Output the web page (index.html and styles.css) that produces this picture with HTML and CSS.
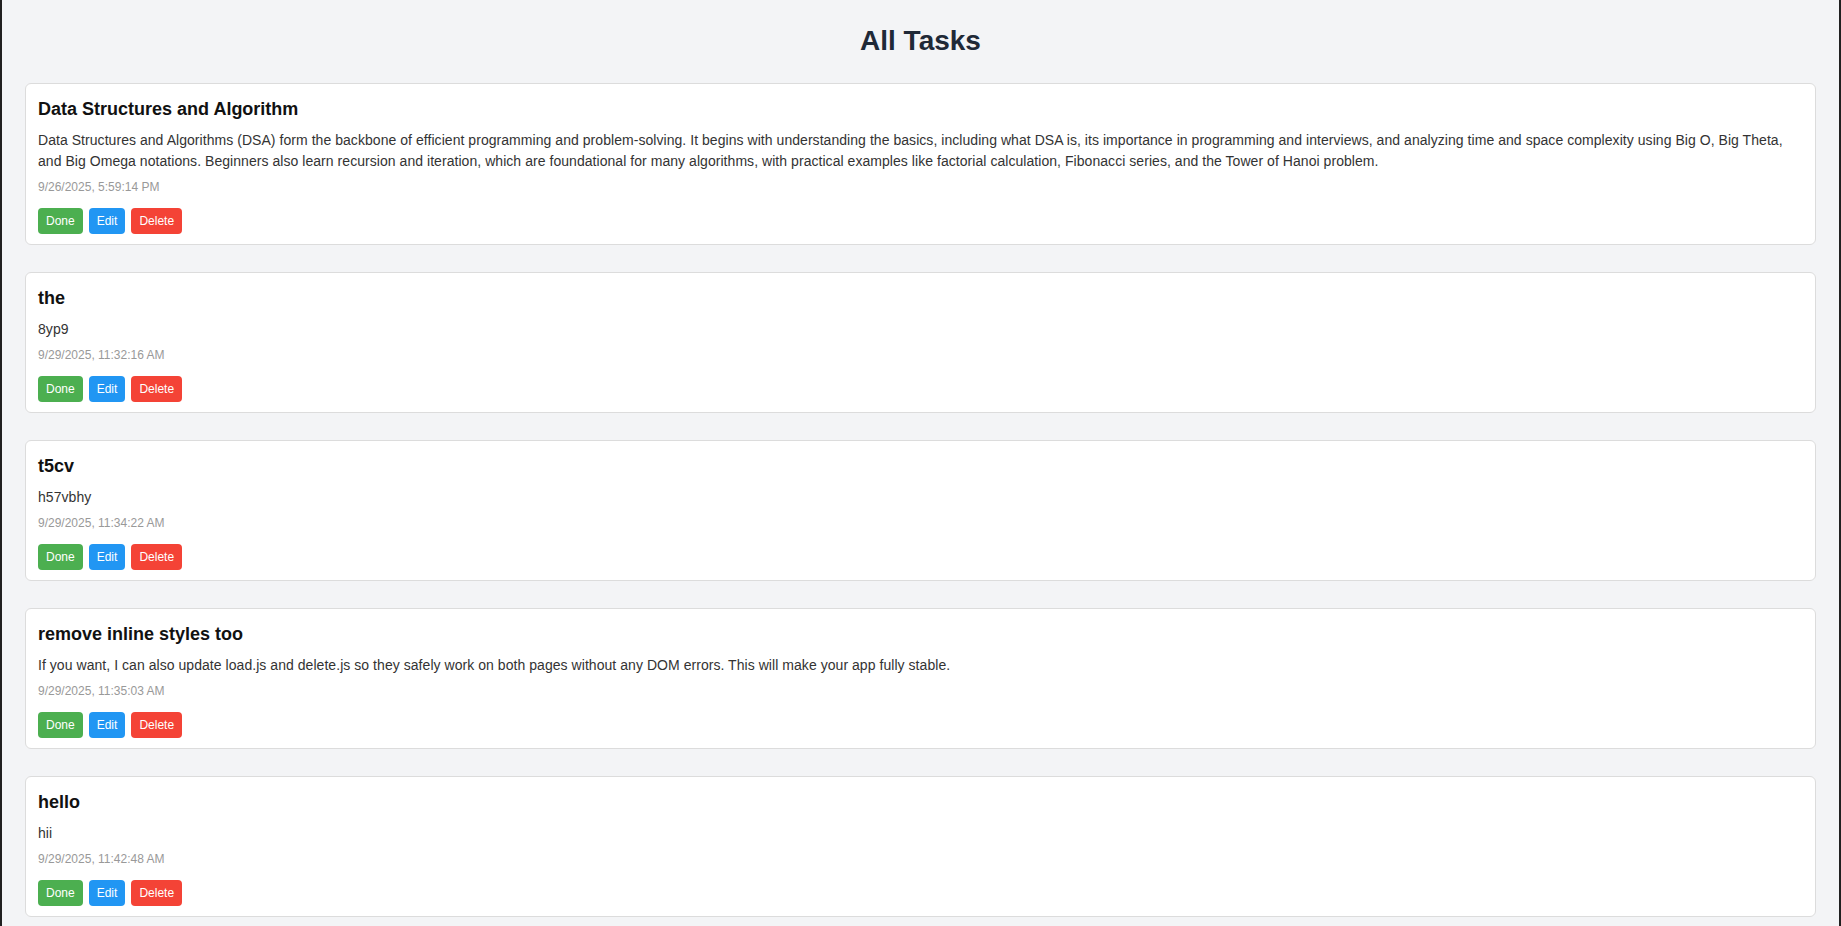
FILE: index.html
```html
<!DOCTYPE html>
<html lang="en">
<head>
<meta charset="utf-8">
<title>All Tasks</title>
<link rel="stylesheet" href="styles.css">
</head>
<body>
<main class="page">
  <h1 class="page-title">All Tasks</h1>
  <div class="task-list">
    <div class="task-card">
      <h3 class="task-title">Data Structures and Algorithm</h3>
      <p class="task-desc">Data Structures and Algorithms (DSA) form the backbone of efficient programming and problem-solving. It begins with understanding the basics, including what DSA is, its importance in programming and interviews, and analyzing time and space complexity using Big O, Big Theta, and Big Omega notations. Beginners also learn recursion and iteration, which are foundational for many algorithms, with practical examples like factorial calculation, Fibonacci series, and the Tower of Hanoi problem.</p>
      <p class="task-date">9/26/2025, 5:59:14 PM</p>
      <div class="task-actions">
        <button class="btn btn-done">Done</button>
        <button class="btn btn-edit">Edit</button>
        <button class="btn btn-delete">Delete</button>
      </div>
    </div>
    <div class="task-card">
      <h3 class="task-title">the</h3>
      <p class="task-desc">8yp9</p>
      <p class="task-date">9/29/2025, 11:32:16 AM</p>
      <div class="task-actions">
        <button class="btn btn-done">Done</button>
        <button class="btn btn-edit">Edit</button>
        <button class="btn btn-delete">Delete</button>
      </div>
    </div>
    <div class="task-card">
      <h3 class="task-title">t5cv</h3>
      <p class="task-desc">h57vbhy</p>
      <p class="task-date">9/29/2025, 11:34:22 AM</p>
      <div class="task-actions">
        <button class="btn btn-done">Done</button>
        <button class="btn btn-edit">Edit</button>
        <button class="btn btn-delete">Delete</button>
      </div>
    </div>
    <div class="task-card">
      <h3 class="task-title">remove inline styles too</h3>
      <p class="task-desc">If you want, I can also update load.js and delete.js so they safely work on both pages without any DOM errors. This will make your app fully stable.</p>
      <p class="task-date">9/29/2025, 11:35:03 AM</p>
      <div class="task-actions">
        <button class="btn btn-done">Done</button>
        <button class="btn btn-edit">Edit</button>
        <button class="btn btn-delete">Delete</button>
      </div>
    </div>
    <div class="task-card">
      <h3 class="task-title">hello</h3>
      <p class="task-desc">hii</p>
      <p class="task-date">9/29/2025, 11:42:48 AM</p>
      <div class="task-actions">
        <button class="btn btn-done">Done</button>
        <button class="btn btn-edit">Edit</button>
        <button class="btn btn-delete">Delete</button>
      </div>
    </div>
  </div>
</main>
</body>
</html>
```
FILE: styles.css
```css
* {
  box-sizing: border-box;
}

html {
  background: #1f1f1f;
}

body {
  margin: 0;
  min-height: 100vh;
  background: #f3f4f6;
  border-left: 2px solid #202020;
  border-right: 2px solid #202020;
  font-family: "Liberation Sans", Arial, sans-serif;
  color: #333;
}

.page {
  padding: 25px 23px 20px;
}

.page-title {
  margin: 0 0 26px;
  font-size: 28px;
  line-height: 32px;
  font-weight: 700;
  text-align: center;
  color: #1f2937;
}

.task-list {
  display: flex;
  flex-direction: column;
  gap: 27px;
}

.task-card {
  background: #fff;
  border: 1px solid #dcdcdc;
  border-radius: 6px;
  padding: 14px 12px 10px;
}

.task-title {
  margin: 0 0 10px;
  font-size: 18px;
  line-height: 22px;
  font-weight: 700;
  color: #111;
}

.task-desc {
  margin: 0 0 7px;
  font-size: 14px;
  line-height: 21px;
  letter-spacing: 0.05px;
  color: #333;
}

.task-date {
  margin: 0 0 13px;
  font-size: 12px;
  line-height: 16px;
  color: #999;
}

.task-actions {
  display: flex;
  gap: 6px;
}

.btn {
  height: 26px;
  padding: 0 8px;
  border: none;
  border-radius: 4px;
  font-family: "Liberation Sans", Arial, sans-serif;
  font-size: 12px;
  line-height: 26px;
  color: #fff;
  cursor: pointer;
}

.btn-done {
  background: #4caf50;
}

.btn-edit {
  background: #2196f3;
}

.btn-delete {
  background: #f44336;
}
```
